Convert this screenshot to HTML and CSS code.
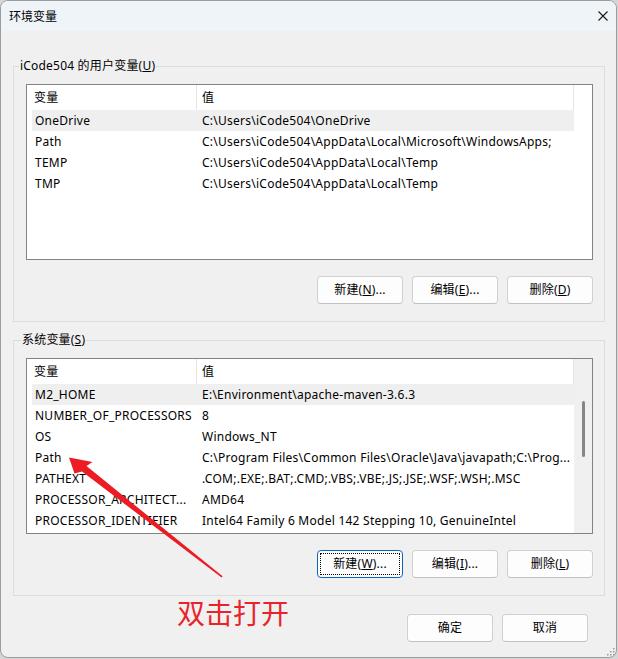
FILE: index.html
```html
<!DOCTYPE html>
<html lang="zh-CN">
<head>
<meta charset="utf-8">
<title>环境变量</title>
<link rel="stylesheet" href="styles.css">
</head>
<body>
<div class="screen">
  <div class="window">
    <div class="titlebar">
      <span class="title">环境变量</span>
      <svg class="close" width="10" height="10" viewBox="0 0 10 10" aria-label="关闭"><path d="M0.5 0.5L9.5 9.5M9.5 0.5L0.5 9.5" stroke="#1a1a1a" stroke-width="1.1" fill="none"/></svg>
    </div>
    <div class="content">
      <fieldset class="group">
        <legend>iCode504 的用户变量(<u>U</u>)</legend>
        <div class="group-body">
          <div class="list">
            <div class="list-main">
              <div class="list-head"><div class="hc1">变量</div><div class="hc2">值</div></div>
              <div class="row sel"><div class="c1">OneDrive</div><div class="c2">C:\Users\iCode504\OneDrive</div></div>
              <div class="row"><div class="c1">Path</div><div class="c2">C:\Users\iCode504\AppData\Local\Microsoft\WindowsApps;</div></div>
              <div class="row"><div class="c1">TEMP</div><div class="c2">C:\Users\iCode504\AppData\Local\Temp</div></div>
              <div class="row"><div class="c1">TMP</div><div class="c2">C:\Users\iCode504\AppData\Local\Temp</div></div>
            </div>
            <div class="vscroll"></div>
          </div>
          <div class="btns">
            <button class="btn">新建(<u>N</u>)...</button>
            <button class="btn">编辑(<u>E</u>)...</button>
            <button class="btn">删除(<u>D</u>)</button>
          </div>
        </div>
      </fieldset>

      <fieldset class="group group-sys">
        <legend>系统变量(<u>S</u>)</legend>
        <div class="group-body">
          <div class="list">
            <div class="list-main">
              <div class="list-head"><div class="hc1">变量</div><div class="hc2">值</div></div>
              <div class="row sel"><div class="c1">M2_HOME</div><div class="c2">E:\Environment\apache-maven-3.6.3</div></div>
              <div class="row"><div class="c1">NUMBER_OF_PROCESSORS</div><div class="c2">8</div></div>
              <div class="row"><div class="c1">OS</div><div class="c2">Windows_NT</div></div>
              <div class="row"><div class="c1">Path</div><div class="c2">C:\Program Files\Common Files\Oracle\Java\javapath;C:\Prog...</div></div>
              <div class="row"><div class="c1">PATHEXT</div><div class="c2">.COM;.EXE;.BAT;.CMD;.VBS;.VBE;.JS;.JSE;.WSF;.WSH;.MSC</div></div>
              <div class="row"><div class="c1">PROCESSOR_ARCHITECT...</div><div class="c2">AMD64</div></div>
              <div class="row"><div class="c1">PROCESSOR_IDENTIFIER</div><div class="c2">Intel64 Family 6 Model 142 Stepping 10, GenuineIntel</div></div>
            </div>
            <div class="vscroll track"><div class="thumb"></div></div>
          </div>
          <div class="btns">
            <button class="btn focus">新建(<u>W</u>)...</button>
            <button class="btn">编辑(<u>I</u>)...</button>
            <button class="btn">删除(<u>L</u>)</button>
          </div>
        </div>
      </fieldset>

      <div class="dialog-btns">
        <button class="btn">确定</button>
        <button class="btn">取消</button>
      </div>
    </div>
    <svg class="grip" width="9" height="9" viewBox="0 0 9 9">
      <rect x="7" y="1" width="1.5" height="1.5" fill="#9a9a9a"/>
      <rect x="4" y="4" width="1.5" height="1.5" fill="#9a9a9a"/>
      <rect x="7" y="4" width="1.5" height="1.5" fill="#9a9a9a"/>
      <rect x="1" y="7" width="1.5" height="1.5" fill="#9a9a9a"/>
      <rect x="4" y="7" width="1.5" height="1.5" fill="#9a9a9a"/>
      <rect x="7" y="7" width="1.5" height="1.5" fill="#9a9a9a"/>
    </svg>
  </div>

  <svg class="arrow" width="618" height="659" viewBox="0 0 618 659">
    <polygon points="69,457.5 92.5,462 86.5,466 222.6,576.3 221.6,577.6 82,471.5 74.5,473.5" fill="#ec1c24"/>
  </svg>
  <div class="note">双击打开</div>
</div>
</body>
</html>
```

FILE: styles.css
```css
* {
  box-sizing: border-box;
}

html,
body {
  margin: 0;
  padding: 0;
}

body {
  width: 618px;
  height: 659px;
  overflow: hidden;
  background: #d6d6d6;
  font-family: "Noto Sans", "Noto Sans CJK SC", sans-serif;
  font-size: 12px;
  line-height: 16px;
  color: #000;
}

.screen {
  position: relative;
  width: 618px;
  height: 659px;
}

.window {
  position: relative;
  width: 617px;
  height: 658px;
  border: 1px solid #9c9c9c;
  border-radius: 8px;
  background: #f0f0f0;
  overflow: hidden;
  display: flex;
  flex-direction: column;
}

.titlebar {
  flex: none;
  height: 30px;
  background: #eff4f9;
  display: flex;
  align-items: center;
  justify-content: space-between;
  padding: 0 8px 0 8px;
}

.title {
  font-family: "Noto Sans CJK SC", sans-serif;
  font-size: 12px;
}

.close {
  display: block;
}

.content {
  flex: 1;
  padding: 27px 11px 0 12px;
}

.group {
  margin: 0;
  padding: 0;
  border: 1px solid #dcdcdc;
  min-width: 0;
}

.group legend {
  margin-left: 5px;
  padding: 0 1px;
  line-height: 16px;
  letter-spacing: 0.2px;
}

.group-body {
  padding: 10px 11px 17px 12px;
}

.group-sys {
  margin-top: 10px;
}

.group-sys legend {
  margin-left: 7px;
}

.list {
  width: 567px;
  height: 176px;
  border: 1px solid #838383;
  background: #fff;
  display: flex;
  overflow: hidden;
  letter-spacing: 0.25px;
}

.list-main {
  width: 547px;
  flex: none;
}

.list-head {
  display: flex;
  height: 25px;
}

.hc1,
.hc2 {
  display: flex;
  align-items: center;
  border-right: 1px solid #e5e5e5;
}

.hc1 {
  width: 170px;
  padding-left: 7px;
}

.hc2 {
  flex: 1;
  padding-left: 5px;
}

.row {
  display: flex;
  height: 21px;
  margin-left: 5px;
  align-items: center;
  white-space: nowrap;
}

.row.sel {
  background: #efefef;
}

.c1 {
  width: 164px;
  padding-left: 3px;
  overflow: hidden;
  flex: none;
}

.c2 {
  flex: 1;
  padding-left: 6px;
  overflow: hidden;
}

.vscroll {
  flex: 1;
}

.vscroll.track {
  background: #f0f0f0;
}

.thumb {
  width: 3px;
  height: 56px;
  margin: 42px auto 0;
  background: #868686;
  border-radius: 2px;
}

.btns {
  display: flex;
  justify-content: flex-end;
  gap: 9px;
  margin-top: 16px;
}

.btn {
  position: relative;
  width: 86px;
  height: 28px;
  padding: 0;
  border: 1px solid #d0d0d0;
  border-bottom-color: #c2c2c2;
  border-radius: 4px;
  background: #fdfdfd;
  font-family: "Noto Sans", "Noto Sans CJK SC", sans-serif;
  font-size: 12px;
  line-height: 16px;
  letter-spacing: 0.2px;
  color: #000;
}

.btn.focus {
  border-color: #0a64c2;
}

.btn.focus::after {
  content: "";
  position: absolute;
  inset: 2px;
  border: 1px dotted #000;
  border-radius: 1px;
}

.dialog-btns {
  display: flex;
  justify-content: flex-end;
  gap: 9px;
  margin-top: 18px;
  margin-right: 17px;
}

.grip {
  position: absolute;
  right: 1px;
  bottom: 1px;
}

.arrow {
  position: absolute;
  left: 0;
  top: 0;
  pointer-events: none;
}

.note {
  position: absolute;
  left: 177px;
  top: 597px;
  font-family: "Noto Sans CJK SC", sans-serif;
  font-size: 28px;
  line-height: 30px;
  color: #e8232b;
}
```
